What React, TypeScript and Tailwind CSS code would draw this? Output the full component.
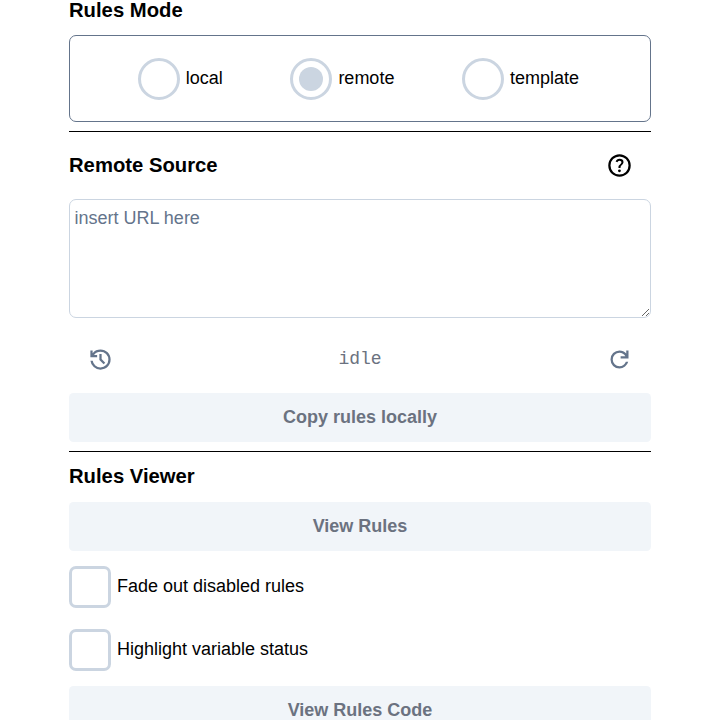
import type { ReactNode } from 'react';

function Icon({ d, className }: { d: string; className: string }) {
  return (
    <svg viewBox="0 0 24 24" fill="currentColor" className={`size-[27px] shrink-0 ${className}`} aria-hidden="true">
      <path d={d} />
    </svg>
  );
}

const HELP =
  'M11.95 18q.525 0 .888-.363t.362-.887t-.362-.888t-.888-.362t-.887.363t-.363.887t.363.888t.887.362m-.9-3.85h1.85q0-.825.188-1.3t1.062-1.3q.65-.65 1.025-1.238T15.55 8.9q0-1.4-1.025-2.15T12.1 6q-1.425 0-2.312.75T8.55 8.55l1.65.65q.125-.45.563-.975T12.1 7.7q.8 0 1.2.438t.4.962q0 .5-.3.938t-.75.812q-1.1.975-1.35 1.475t-.25 1.825M12 22q-2.075 0-3.9-.788t-3.175-2.137T2.788 15.9T2 12t.788-3.9t2.137-3.175T8.1 2.788T12 2t3.9.788t3.175 2.137T21.213 8.1T22 12t-.788 3.9t-2.137 3.175t-3.175 2.138T12 22m0-2q3.35 0 5.675-2.325T20 12t-2.325-5.675T12 4T6.325 6.325T4 12t2.325 5.675T12 20';
const HISTORY =
  'M12 21q-3.45 0-6.012-2.287T3.05 13H5.1q.35 2.6 2.313 4.3T12 19q2.925 0 4.963-2.037T19 12t-2.037-4.962T12 5q-1.725 0-3.225.8T6.25 8H9v2H3V4h2v2.35q1.275-1.6 3.113-2.475T12 3q1.875 0 3.513.713t2.85 1.924t1.925 2.85T21 12t-.712 3.513t-1.925 2.85t-2.85 1.925T12 21m2.8-4.8L11 12.4V7h2v4.6l3.2 3.2z';
const REFRESH =
  'M12 20q-3.35 0-5.675-2.325T4 12t2.325-5.675T12 4q1.725 0 3.3.712T18 6.75V4h2v7h-7V9h4.2q-.8-1.4-2.187-2.2T12 6Q9.5 6 7.75 7.75T6 12t1.75 4.25T12 18q1.925 0 3.475-1.1T17.65 14h2.1q-.7 2.65-2.85 4.325T12 20';

function Heading({ children }: { children: ReactNode }) {
  return <h2 className="text-[20.25px] leading-[31px] font-bold">{children}</h2>;
}

function Radio({ label, selected = false }: { label: string; selected?: boolean }) {
  return (
    <label className="flex items-center gap-[6px]">
      <span className="flex size-[42px] items-center justify-center rounded-full border-3 border-[#cbd5e1]">
        {selected && <span className="size-6 rounded-full bg-[#cbd5e1]" />}
      </span>
      <span className="-mt-px">{label}</span>
    </label>
  );
}

function Checkbox({ label }: { label: string }) {
  return (
    <label className="flex items-center gap-[6px]">
      <span className="size-[42px] rounded-[7px] border-3 border-[#cbd5e1]" />
      <span className="-mt-px">{label}</span>
    </label>
  );
}

function Button({ children }: { children: ReactNode }) {
  return (
    <button className="block h-[49px] w-full rounded-[4.5px] bg-[#f1f5f9] font-bold text-[#6b7280]">
      {children}
    </button>
  );
}

export default function App() {
  return (
    <main className="h-[720px] overflow-hidden bg-white px-[69px] font-['Liberation_Sans',Arial,sans-serif] text-[18px] leading-[27px] text-black">
      <div className="-mt-[5px]">
        <Heading>Rules Mode</Heading>
      </div>
      <div className="mt-[9px] flex h-[87px] items-center justify-evenly rounded-[7px] border border-[#64748b] pr-[3.2px]">
        <Radio label="local" />
        <Radio label="remote" selected />
        <Radio label="template" />
      </div>
      <hr className="mt-[9px] border-black" />

      <div className="mt-[18px] flex h-[31px] items-center justify-between pr-[18px]">
        <Heading>Remote Source</Heading>
        <Icon d={HELP} className="text-black" />
      </div>
      <textarea
        placeholder="insert URL here"
        className="mt-[18px] block h-[119px] w-full resize rounded-[7px] border border-[#cbd5e1] px-[4.5px] py-[4.5px] placeholder:text-[#64748b]"
      />
      <div className="mt-[28px] flex h-[27px] items-center justify-between px-[18px] text-[#64748b]">
        <Icon d={HISTORY} className="" />
        <span className="font-['Liberation_Mono',monospace] text-[#6b7280]">idle</span>
        <Icon d={REFRESH} className="" />
      </div>
      <div className="mt-[20px]">
        <Button>Copy rules locally</Button>
      </div>
      <hr className="mt-[9px] border-black" />

      <div className="mt-[9px]">
        <Heading>Rules Viewer</Heading>
      </div>
      <div className="mt-[10px]">
        <Button>View Rules</Button>
      </div>
      <div className="mt-[15px] mb-[15px] flex flex-col gap-[21px]">
        <Checkbox label="Fade out disabled rules" />
        <Checkbox label="Highlight variable status" />
      </div>
      <Button>View Rules Code</Button>
    </main>
  );
}
